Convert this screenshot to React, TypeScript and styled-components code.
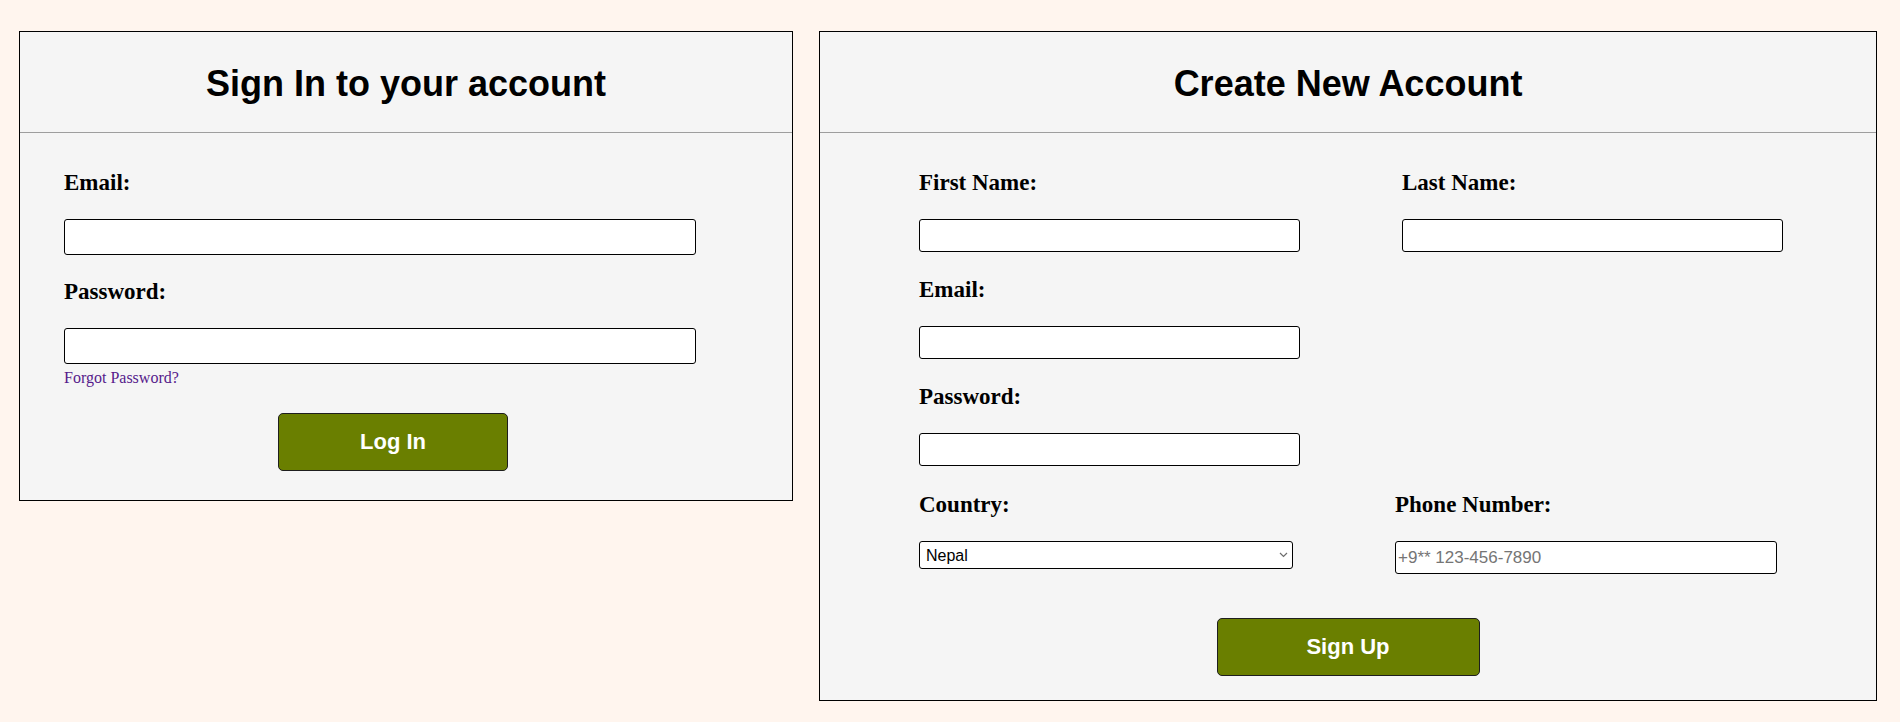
import * as React from 'react';
import styled, { createGlobalStyle } from 'styled-components';

const GlobalStyle = createGlobalStyle`
  body {
    margin: 0;
    background: #fff5ee;
    font-family: 'Liberation Serif', 'Times New Roman', serif;
  }
`;

const countries = ['Nepal', 'India', 'Bangladesh', 'Bhutan', 'Sri Lanka', 'Pakistan'];

const Chevron: React.FC = () => (
  <svg width='9' height='6' viewBox='0 0 9 6' fill='none'>
    <path d='M1 1l3.5 3.5L8 1' stroke='#6d6d6d' strokeWidth='1.2' />
  </svg>
);

const App: React.FC = () => {
  const [country, setCountry] = React.useState('Nepal');

  return (
    <>
      <GlobalStyle />
      <Page>
        <LoginCard>
          <CardHeader>
            <Title>Sign In to your account</Title>
          </CardHeader>
          <CardBody $bottom={29}>
            <LoginForm>
              <Field>
                <Label htmlFor='login-email'>Email:</Label>
                <TextInput id='login-email' type='email' $width={632} $height={36} />
              </Field>
              <Field>
                <Label htmlFor='login-password'>Password:</Label>
                <TextInput id='login-password' type='password' $width={632} $height={36} />
                <ForgotLink href='#'>Forgot Password?</ForgotLink>
              </Field>
              <SubmitButton type='button' $width={230}>
                Log In
              </SubmitButton>
            </LoginForm>
          </CardBody>
        </LoginCard>

        <SignupCard>
          <CardHeader>
            <Title>Create New Account</Title>
          </CardHeader>
          <CardBody $bottom={24}>
            <SignupForm>
              <Row>
                <Field>
                  <Label htmlFor='first-name'>First Name:</Label>
                  <TextInput id='first-name' $width={381} $height={33} />
                </Field>
                <Field>
                  <Label htmlFor='last-name'>Last Name:</Label>
                  <TextInput id='last-name' $width={381} $height={33} />
                </Field>
              </Row>
              <Field>
                <Label htmlFor='signup-email'>Email:</Label>
                <TextInput id='signup-email' type='email' $width={381} $height={33} />
              </Field>
              <Field>
                <Label htmlFor='signup-password'>Password:</Label>
                <TextInput id='signup-password' type='password' $width={381} $height={33} />
              </Field>
              <Row $top={1}>
                <Field>
                  <Label htmlFor='country'>Country:</Label>
                  <SelectWrap>
                    <CountrySelect
                      id='country'
                      value={country}
                      onChange={e => setCountry(e.target.value)}
                    >
                      {countries.map(c => (
                        <option key={c} value={c}>
                          {c}
                        </option>
                      ))}
                    </CountrySelect>
                    <SelectArrow>
                      <Chevron />
                    </SelectArrow>
                  </SelectWrap>
                </Field>
                <Field>
                  <Label htmlFor='phone'>Phone Number:</Label>
                  <TextInput
                    id='phone'
                    type='tel'
                    placeholder='+9** 123-456-7890'
                    $width={382}
                    $height={33}
                  />
                </Field>
              </Row>
            </SignupForm>
            <ButtonRow>
              <SubmitButton type='button' $width={263}>
                Sign Up
              </SubmitButton>
            </ButtonRow>
          </CardBody>
        </SignupCard>
      </Page>
    </>
  );
};

const Page = styled.main`
  display: flex;
  align-items: flex-start;
  gap: 26px;
  padding: 31px 23px 0 19px;
`;

const Card = styled.section`
  box-sizing: border-box;
  background: #f5f5f5;
  border: 1px solid #000;
`;

const LoginCard = styled(Card)`
  width: 774px;
  flex-shrink: 0;
`;

const SignupCard = styled(Card)`
  flex: 1;
`;

const CardHeader = styled.header`
  box-sizing: border-box;
  height: 101px;
  padding-top: 31px;
  border-bottom: 1px solid #9e9e9e;
  text-align: center;
`;

const Title = styled.h1`
  margin: 0;
  font-family: 'Liberation Sans', Arial, sans-serif;
  font-weight: 700;
  font-size: 36px;
  line-height: 41px;
  color: #000;
`;

const CardBody = styled.div<{ $bottom: number }>`
  padding-top: 37px;
  padding-bottom: ${p => p.$bottom}px;
`;

const LoginForm = styled.form`
  display: flex;
  flex-direction: column;
  gap: 24px;
  width: 658px;
  margin-left: 44px;
`;

const SignupForm = styled.form`
  display: flex;
  flex-direction: column;
  gap: 25px;
  padding-left: 99px;
`;

const Row = styled.div<{ $top?: number }>`
  display: flex;
  align-items: flex-start;
  gap: 102px;
  margin-top: ${p => p.$top ?? 0}px;
`;

const Field = styled.div`
  display: flex;
  flex-direction: column;
  align-items: flex-start;
`;

const Label = styled.label`
  display: block;
  font-family: 'Liberation Serif', 'Times New Roman', serif;
  font-weight: 700;
  font-size: 23px;
  line-height: 25px;
  color: #000;
  margin-bottom: 24px;
`;

const TextInput = styled.input<{ $width: number; $height: number }>`
  box-sizing: border-box;
  width: ${p => p.$width}px;
  height: ${p => p.$height}px;
  padding: 1px 2px;
  border: 1px solid #000;
  border-radius: 3px;
  background: #fff;
  font-family: 'Liberation Sans', Arial, sans-serif;
  font-size: 17px;
  color: #000;
  outline: none;

  &::placeholder {
    color: #757575;
  }
`;

const SelectWrap = styled.div`
  position: relative;
  width: 374px;
`;

const CountrySelect = styled.select`
  appearance: none;
  box-sizing: border-box;
  width: 100%;
  height: 28px;
  padding: 0 20px 0 6px;
  border: 1px solid #000;
  border-radius: 3px;
  background: #fff;
  font-family: 'Liberation Sans', Arial, sans-serif;
  font-size: 16px;
  color: #000;
`;

const SelectArrow = styled.span`
  position: absolute;
  right: 5px;
  top: 11px;
  display: flex;
  pointer-events: none;
`;

const ForgotLink = styled.a`
  margin-top: 5px;
  font-family: 'Liberation Serif', 'Times New Roman', serif;
  font-size: 16px;
  line-height: 18px;
  color: #551a8b;
  text-decoration: none;
`;

const SubmitButton = styled.button<{ $width: number }>`
  align-self: center;
  box-sizing: border-box;
  width: ${p => p.$width}px;
  height: 58px;
  margin-top: 2px;
  border: 1px solid #1e1e1e;
  border-radius: 5px;
  background: #6a7f00;
  color: #fff;
  font-family: 'Liberation Sans', Arial, sans-serif;
  font-weight: 700;
  font-size: 22px;
  cursor: pointer;
`;

const ButtonRow = styled.div`
  display: flex;
  justify-content: center;
  margin-top: 42px;
`;

export default App;
